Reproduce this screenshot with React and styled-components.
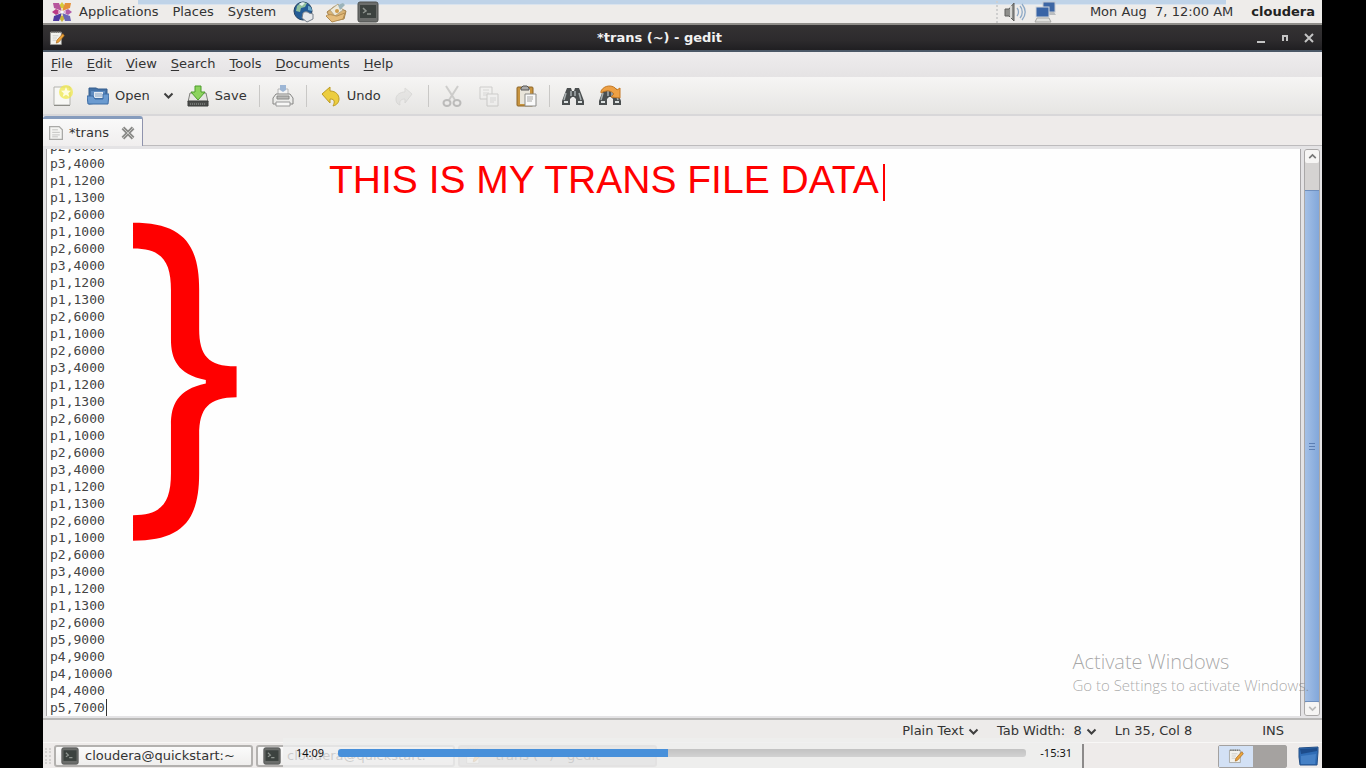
import React, { useLayoutEffect, useRef } from "react";
import styled, { createGlobalStyle, css } from "styled-components";

const GlobalStyle = createGlobalStyle`
  * { box-sizing: border-box; }
  body { margin: 0; background: #000; }
  button, input, textarea, select { font: inherit; color: inherit; margin: 0; }
  button { border: 0; background: none; padding: 0; }
`;

const Desktop = styled.div`
  position: relative;
  display: flex;
  flex-direction: column;
  min-height: 100vh;
  margin: 0 44px 0 43px;
  background: #edebea;
  color: #333;
  font: 13px/18px "DejaVu Sans", sans-serif;
  overflow: hidden;
`;

const Panel = styled.header`
  position: relative;
  display: flex;
  align-items: center;
  height: 25px;
  padding: 0 7px 0 8px;
  background: #eeecea;
  border-bottom: 2px solid #8f8d89;
  &::before {
    content: "";
    position: absolute;
    inset: 0 96px auto 95px;
    height: 4px;
    background: #bfd3e8;
    border-bottom: 1px solid #d9e3ee;
  }
`;

const PanelMenu = styled.nav`
  position: relative;
  display: flex;
  align-items: center;
  gap: 14px;
`;

const PanelButton = styled.button`
  display: flex;
  align-items: center;
  gap: 6px;
`;

const Launchers = styled.div`
  position: relative;
  display: flex;
  gap: 10px;
  margin-left: 17px;
`;

const Tray = styled.div`
  position: relative;
  display: flex;
  align-items: center;
  gap: 8px;
  margin-left: auto;
  white-space: pre;
  padding-left: 6px;
  border-left: 2px dotted #cfcfcf;
`;

const Clock = styled.time`
  margin-left: 26px;
`;

const UserName = styled.strong`
  margin-left: 10px;
  color: #222;
`;

const TitleBar = styled.div`
  display: grid;
  grid-template-columns: 72px 1fr 72px;
  align-items: center;
  height: 27px;
  padding: 0 6px;
  background: linear-gradient(#343233, #2d2b2d 60%, #201f22);
  border-bottom: 2px solid #4c5968;
`;

const Title = styled.h1`
  margin: 0;
  padding-right: 46px;
  text-align: center;
  color: #f2f2f2;
  font-size: 13px;
  line-height: 18px;
`;

const WindowButtons = styled.div`
  display: flex;
  justify-content: flex-end;
  gap: 10px;
`;

const WindowButton = styled.button`
  display: flex;
`;

const MenuBar = styled.nav`
  display: flex;
  align-items: center;
  gap: 14px;
  height: 25px;
  padding: 0 8px 2px;
  background: linear-gradient(#efedee, #e5e3e4);
`;

const Mnemonic = styled.span`
  text-decoration: underline;
  text-underline-offset: 2px;
`;

const ToolBar = styled.div`
  display: flex;
  align-items: center;
  height: 39px;
  padding: 0 3px;
  background: linear-gradient(#f6f5f4, #e6e5e3);
  border-bottom: 2px solid #d8d7d9;
`;

const ToolGroup = styled.div`
  display: flex;
  align-items: center;
  gap: ${(p) => (p.$wide ? 3 : 1)}px;
`;

const ToolButton = styled.button`
  display: flex;
  align-items: center;
  gap: 6px;
  height: 34px;
  padding: 0 6px;
  opacity: ${(p) => (p.disabled ? 0.35 : 1)};
`;

const Separator = styled.span`
  width: 1px;
  height: 22px;
  margin: 0 6px;
  background: #c9c8c6;
`;

const TabStrip = styled.div`
  display: flex;
  height: 30px;
  background: #eeebea;
  border-bottom: 1px solid #bdbbbd;
`;

const Tab = styled.div`
  display: flex;
  align-items: center;
  gap: 6px;
  height: 30px;
  padding: 0 7px 0 6px;
  background: linear-gradient(#f9f9f9, #f0eeee);
  border: 1px solid #8f93ad;
  border-width: 3px 1px 0 0;
  border-top-color: #869cbd;
  border-radius: 3px 3px 0 0;
`;

const TabLabel = styled.span`
  width: 46px;
`;

const TabClose = styled.button`
  display: flex;
`;

const EditorFrame = styled.main`
  flex: 1;
  display: flex;
  padding: 3px 2px 2px 3px;
  background: #e4e3e5;
  border-bottom: 2px solid #b9b8b7;
`;

const Page = styled.div`
  position: relative;
  flex: 1;
  display: flex;
  background: #fefefe;
  border: 1px solid #a8a6a8;
  border-width: 0 1px;
`;

const Source = styled.textarea`
  flex: 1;
  display: block;
  height: 567px;
  padding: 0 0 0 3px;
  border: 0;
  outline: 0;
  resize: none;
  overflow: hidden;
  background: transparent;
  color: #444;
  font: 13px/17px "DejaVu Sans Mono", monospace;
`;

const TextCaret = styled.span`
  position: absolute;
  left: 59px;
  bottom: 0;
  width: 1px;
  height: 17px;
  background: #333;
`;

const Annotation = styled.div`
  position: absolute;
  left: 282px;
  top: 11px;
  padding-right: 6px;
  color: #f00;
  font: 39px/40px "Liberation Sans", Arial, sans-serif;
  white-space: nowrap;
  &::after {
    content: "";
    position: absolute;
    right: 0;
    top: 4px;
    width: 2px;
    height: 37px;
    background: #f00;
  }
`;

const Brace = styled.div`
  position: absolute;
  left: 65px;
  top: 42px;
  color: #f00;
  font: 350px/350px Inter, sans-serif;
`;

const ScrollBar = styled.div`
  display: flex;
  flex-direction: column;
  width: 16px;
  margin-left: 3px;
  background: #d5d3d2;
  border: 1px solid #aaa8a8;
  border-radius: 3px;
`;

const ScrollStep = styled.button`
  display: flex;
  align-items: center;
  justify-content: center;
  height: 13px;
  background: #f6f5f4;
  border-radius: 2px;
`;

const ScrollTrough = styled.div`
  flex: 1;
  display: flex;
  padding-top: 27px;
`;

const ScrollThumb = styled.div`
  flex: 1;
  display: flex;
  align-items: center;
  justify-content: center;
  background: linear-gradient(90deg, #a4c0e6, #82a7da);
  border: 1px solid #6f8fbd;
  border-width: 1px 0;
`;

const Watermark = styled.aside`
  position: absolute;
  right: 13px;
  bottom: 73px;
  color: rgba(110, 110, 110, 0.6);
  font: 300 15px/20px "Open Sans", "Noto Sans", sans-serif;
  white-space: nowrap;
`;

const WatermarkTitle = styled.div`
  font-size: 20px;
  line-height: 26px;
`;

const StatusBar = styled.footer`
  display: flex;
  align-items: center;
  justify-content: flex-end;
  height: 22px;
  padding-right: 38px;
`;

const StatusItem = styled.button`
  display: flex;
  align-items: center;
  gap: 4px;
  white-space: pre;
  margin-right: ${(p) => p.$space || 18}px;
`;

const TaskBar = styled.footer`
  display: flex;
  align-items: center;
  gap: 3px;
  height: 26px;
  padding: 1px 2px 0 2px;
  background: #eeebea;
  border-top: 1px solid #f8f7f6;
`;

const Grip = styled.span`
  width: 6px;
  height: 16px;
  border-left: 2px dotted #d4d2d0;
  border-right: 2px dotted #d4d2d0;
`;

const Task = styled.button`
  display: flex;
  align-items: center;
  gap: 6px;
  width: 199px;
  height: 22px;
  padding: 0 5px;
  border: 2px solid #b3b1af;
  border-radius: 3px;
  background: linear-gradient(#fbfbfb, #efeeed);
  ${(p) =>
    p.$active &&
    css`
      background: #c4c2c0;
      border-color: #b0aeac;
    `}
`;

const Pager = styled.div`
  display: flex;
  width: 69px;
  height: 23px;
  margin-left: auto;
  border: 1px solid #a3a1a0;
  border-radius: 2px;
`;

const Workspace = styled.button`
  flex: 1;
  display: flex;
  align-items: center;
  justify-content: center;
  background: ${(p) => (p.$current ? "#d3e1f5" : "#a5a2a0")};
`;

const TrashSlot = styled.button`
  display: flex;
  margin-left: 8px;
`;

const Player = styled.section`
  position: absolute;
  left: 240px;
  right: 238px;
  bottom: 0;
  display: flex;
  align-items: flex-start;
  gap: 14px;
  height: 30px;
  padding: 6px 12px 0 13px;
  background: rgba(238, 238, 238, 0.82);
  color: #111;
  font: 11px/18px "Noto Sans", sans-serif;
  &::after {
    content: "";
    position: absolute;
    inset: 6px 0 0 auto;
    width: 2px;
    background: #8c8a8a;
  }
`;

const Seek = styled.input`
  appearance: none;
  flex: 1;
  min-width: 0;
  height: 8px;
  margin: 5px 0 0;
  border-radius: 3px;
  background: linear-gradient(#4890da, #4890da) left / 48% 100% no-repeat,
    linear-gradient(#c2c2c2, #d2d2d2);
  &::-webkit-slider-thumb {
    appearance: none;
    width: 1px;
    height: 8px;
  }
`;

const Svg = ({ size = 22, children }) => (
  <svg width={size} height={size} viewBox="0 0 22 22" fill="none" aria-hidden="true">
    {children}
  </svg>
);

const DistroIcon = () => (
  <Svg>
    <path d="M11 1l3 4-3 5-3-5z" fill="#d8c93a" />
    <path d="M21 11l-4 3-5-3 5-3z" fill="#b05aa8" />
    <path d="M11 21l-3-4 3-5 3 5z" fill="#c9b53c" />
    <path d="M1 11l4-3 5 3-5 3z" fill="#b93a86" />
    <path d="M2 2h6l3 8-8-3z" fill="#b6559d" />
    <path d="M20 2h-6l-3 8 8-3z" fill="#e5913b" />
    <path d="M20 20h-6l-3-8 8 3z" fill="#6a67b5" />
    <path d="M2 20h6l3-8-8 3z" fill="#4f3aa0" />
    <path d="M11 7v8M7 11h8" stroke="#fff" />
  </Svg>
);

const GlobeIcon = () => (
  <Svg>
    <circle cx="10" cy="10" r="9" fill="#245c96" stroke="#244261" />
    <path d="M4 5c3-4 8-4 10-3l-2 4-4 1-1 4-4-1z" fill="#8fc09c" />
    <path d="M6 3c2-2 5-2 6-1l-3 3z" fill="#e3f0ed" />
    <path d="M10 12c2-2 5-1 6 0l4 1v5l-6 3-5-4z" fill="#e6e8eb" stroke="#77808b" />
    <path d="M15 5c3 0 4 3 4 5l-4-1z" fill="#6da9c8" />
  </Svg>
);

const MailIcon = () => (
  <Svg>
    <path d="M2 11l8-6 11 5-2 8-12 2z" fill="#d9b273" stroke="#a3814c" />
    <path d="M5 9l8-6 5 6-8 6z" fill="#eee9da" stroke="#b5a888" />
    <path d="M13 4l5-2 2 2-5 5z" fill="#9bb3ba" />
    <path d="M1 15c4-3 8 0 11 0l8-3-2 6-11 3z" fill="#e5bc7b" stroke="#b38c51" />
    <circle cx="12" cy="10" r="2" fill="#cf9d4d" />
  </Svg>
);

const TerminalIcon = ({ size }) => (
  <Svg size={size}>
    <rect x="1" y="1" width="20" height="20" rx="2" fill="#6b6d6b" stroke="#4e504e" />
    <rect x="3" y="4" width="16" height="13" fill="#3c423f" />
    <path d="M6 7l3 3-3 2M10 13h4" stroke="#8f9590" strokeWidth="1.5" />
  </Svg>
);

const SpeakerIcon = () => (
  <Svg>
    <path d="M1 8h4l5-6v18l-5-5H1z" fill="#8e8e8b" stroke="#5e5e5c" />
    <path d="M7 5v12" stroke="#d5d5d2" strokeWidth="2" />
    <path d="M13 7c2 2 2 6 0 8M16 5c3 3 3 9 0 12M18 3c4 5 4 11 0 16" stroke="#8ea9c6" strokeWidth="1.3" />
  </Svg>
);

const NetworkIcon = () => (
  <Svg>
    <rect x="9" y="1" width="12" height="10" fill="#3d66a5" stroke="#c3c8d0" />
    <path d="M13 14h9l-2-3h-6z" fill="#babdc0" />
    <rect x="2" y="6" width="13" height="10" fill="#3964a6" stroke="#d2d6db" />
    <path d="M1 21h16l-2-4H3z" fill="#e1e1de" stroke="#a6a6a3" />
  </Svg>
);

const NotepadIcon = ({ size }) => (
  <Svg size={size}>
    <path d="M2 3h15v17H2z" fill="#f2f2ee" stroke="#999994" />
    <path d="M3 3h13" stroke="#7c7c78" strokeWidth="2" strokeDasharray="2 1" />
    <path d="M5 8h8M5 11h6M5 14h5" stroke="#c2c2be" />
    <path d="M19 5l2 3-8 9-3 1 1-4z" fill="#eba43a" stroke="#a8691e" />
  </Svg>
);

const NewIcon = () => (
  <Svg>
    <path d="M2 2h16v18H2z" fill="#f8f8f5" stroke="#b3b3ae" />
    <path d="M2 20.500h16" stroke="#8e8e88" />
    <circle cx="14" cy="7" r="7" fill="#f0e84a" opacity=".75" />
    <path d="M14 2l1.500 3.500 3.500.3-2.700 2.400.9 3.600-3.200-2-3.200 2 .9-3.600L9 5.800l3.500-.3z" fill="#fffde0" />
  </Svg>
);

const FolderIcon = () => (
  <Svg>
    <path d="M2 19V3h7l2 1h9v13z" fill="#4572a6" stroke="#355d8c" />
    <path d="M4 6h14v6H4z" fill="#5f8cc0" />
    <path d="M7 7h9v6H7z" fill="#e3eaf2" />
    <path d="M8 9h7M8 11h7" stroke="#8ca7c4" />
    <path d="M0 11h6l2 3h8V9h6l-1 10H1z" fill="#6b9bd0" stroke="#3d6ca5" />
  </Svg>
);

const SaveIcon = () => (
  <Svg>
    <path d="M3 8h16l2 9H1z" fill="#e5e5e2" stroke="#80807c" />
    <path d="M1 16h20v5H1z" fill="#4b4d4b" stroke="#3b3d3b" />
    <path d="M3 19h16" stroke="#9da09d" strokeDasharray="1 1" />
    <path d="M8 1h6v6h4l-7 8-7-8h4z" fill="#8cd35e" stroke="#4c9d2b" />
  </Svg>
);

const PrintIcon = () => (
  <Svg>
    <path d="M6 9V4h10v5" fill="#f5f5f5" stroke="#b6b6b6" />
    <path d="M8 0h6v5l-3 2-3-2z" fill="#9db6d5" />
    <path d="M4 9h14l3 4v6H1v-6z" fill="#ececea" stroke="#858583" />
    <path d="M5 11h12v3H5z" fill="#b9b9b7" stroke="#8a8a88" />
    <path d="M4 17h14v4H4z" fill="#f7f7f6" stroke="#999" />
  </Svg>
);

const UndoIcon = () => (
  <Svg>
    <path d="M3 9l8-7v4c6 0 9 4 9 8 0 3-2 6-6 7 2-4 2-7-3-7v4z" fill="#eccd3f" stroke="#bd9b23" />
  </Svg>
);

const RedoIcon = () => (
  <Svg>
    <path d="M18 9l-7-6v4C6 7 2 10 2 14c0 3 1 5 4 6-1-4 1-6 5-6v4z" fill="#d3d3d1" stroke="#b5b5b3" />
  </Svg>
);

const CutIcon = () => (
  <Svg>
    <path d="M5 1l9 14M17 1L8 15" stroke="#8f8f8d" strokeWidth="2" />
    <ellipse cx="6" cy="18" rx="3.500" ry="3" stroke="#666" strokeWidth="2" />
    <ellipse cx="16" cy="18" rx="3.500" ry="3" stroke="#666" strokeWidth="2" />
  </Svg>
);

const CopyIcon = () => (
  <Svg>
    <path d="M2 2h12v12H2z" fill="#f1f1f0" stroke="#8d8d8b" />
    <path d="M5 5h6M5 8h6M5 10h6" stroke="#aaa" />
    <path d="M9 9h11v12H9z" fill="#f5f5f4" stroke="#8d8d8b" />
    <path d="M12 13h6M12 15h6M12 17h4" stroke="#aaa" />
  </Svg>
);

const PasteIcon = () => (
  <Svg>
    <rect x="2" y="2" width="16" height="19" rx="1" fill="#c8943f" stroke="#8c6528" />
    <path d="M5 4h10v15H5z" fill="#e9e5da" />
    <path d="M6 5V3l2-2h4l2 2v2z" fill="#aaa" stroke="#555" />
    <path d="M10 9h11v12H10z" fill="#fafafa" stroke="#8b8b88" />
    <path d="M12 12h6M12 14h6M12 16h5" stroke="#a7a7a5" />
  </Svg>
);

const Binoculars = () => (
  <>
    <path d="M5 3h4l1 3h2l1-3h4l2 5 3 8v4h-8v-6l-2-2h-2l-2 2v6H0v-4l3-8z" fill="#4b4f50" />
    <path d="M4 8l-2 7M17 8l2 7M9 6v5M13 6v5" stroke="#a8afb0" strokeWidth="1.500" />
    <path d="M2 16h4v2H2zM16 16h4v2h-4z" fill="#dce1e1" />
  </>
);

const FindIcon = () => (
  <Svg>
    <Binoculars />
  </Svg>
);

const ReplaceIcon = () => (
  <Svg>
    <Binoculars />
    <path d="M2 6c3-6 12-7 16-1l3-2v10l-9-1 3-3C12 5 7 5 2 8z" fill="#eda044" stroke="#c57924" />
  </Svg>
);

const DocIcon = () => (
  <Svg size={14}>
    <path d="M1 1h15l5 5v15H1z" fill="#f4f4f2" stroke="#a9a9a7" strokeWidth="2" />
    <path d="M5 6h9M5 10h12M5 14h12M5 17h9" stroke="#c2c2c0" strokeWidth="1.500" />
  </Svg>
);

const CloseTabIcon = () => (
  <Svg size={14}>
    <path d="M3 3l16 16M19 3L3 19" stroke="#8a8a88" strokeWidth="6" />
    <path d="M3 3l16 16M19 3L3 19" stroke="#c8c8c6" strokeWidth="1.500" />
  </Svg>
);

const Chevron = ({ up, size = 11, color = "#3f3f3f" }) => (
  <svg width={size} height={size} viewBox="0 0 11 11" fill="none" aria-hidden="true">
    <path d={up ? "M1.500 7.500l4-4 4 4" : "M1.500 3.500l4 4 4-4"} stroke={color} strokeWidth="2" />
  </svg>
);

const WindowGlyph = ({ d }) => (
  <svg width="14" height="14" viewBox="0 0 14 14" fill="none" aria-hidden="true">
    <path d={d} stroke="#c4c4c4" strokeWidth="2" />
  </svg>
);

const TrashIcon = () => (
  <Svg>
    <path d="M1 3l19-1v5l-1 13H2L1 12z" fill="#2f6cb5" stroke="#244f86" />
    <path d="M2 4l17-1v3L3 9z" fill="#1d4c8b" />
    <path d="M3 11l15-2-1 10H3z" fill="#4681c6" />
  </Svg>
);

const LINES = [
  "p1,1000", "p2,6000",
  "p3,4000", "p1,1200", "p1,1300", "p2,6000", "p1,1000", "p2,6000",
  "p3,4000", "p1,1200", "p1,1300", "p2,6000", "p1,1000", "p2,6000",
  "p3,4000", "p1,1200", "p1,1300", "p2,6000", "p1,1000", "p2,6000",
  "p3,4000", "p1,1200", "p1,1300", "p2,6000", "p1,1000", "p2,6000",
  "p3,4000", "p1,1200", "p1,1300", "p2,6000",
  "p5,9000", "p4,9000", "p4,10000", "p4,4000", "p5,7000",
];

const MENUS = ["File", "Edit", "View", "Search", "Tools", "Documents", "Help"];

function Editor() {
  const ref = useRef(null);
  useLayoutEffect(() => {
    ref.current.scrollTop = ref.current.scrollHeight;
  }, []);
  return (
    <EditorFrame>
      <Page>
        <Source ref={ref} aria-label="Document text" spellCheck={false} defaultValue={LINES.join("\n")} />
        <TextCaret />
        <Annotation>THIS IS MY TRANS FILE DATA</Annotation>
        <Brace>{"}"}</Brace>
      </Page>
      <ScrollBar>
        <ScrollStep aria-label="Scroll up"><Chevron up size={9} color="#777" /></ScrollStep>
        <ScrollTrough>
          <ScrollThumb>
            <svg width="6" height="7" viewBox="0 0 6 7" aria-hidden="true">
              <path d="M0 .5h6M0 3.500h6M0 6.500h6" stroke="#5c7fb4" />
            </svg>
          </ScrollThumb>
        </ScrollTrough>
        <ScrollStep aria-label="Scroll down"><Chevron size={9} color="#bbb" /></ScrollStep>
      </ScrollBar>
    </EditorFrame>
  );
}

export default function App() {
  return (
    <>
      <GlobalStyle />
      <Desktop>
        <Panel>
          <PanelMenu>
            <PanelButton><DistroIcon />Applications</PanelButton>
            <PanelButton>Places</PanelButton>
            <PanelButton>System</PanelButton>
          </PanelMenu>
          <Launchers>
            <PanelButton aria-label="Web browser"><GlobeIcon /></PanelButton>
            <PanelButton aria-label="Mail"><MailIcon /></PanelButton>
            <PanelButton aria-label="Terminal"><TerminalIcon /></PanelButton>
          </Launchers>
          <Tray>
            <SpeakerIcon />
            <NetworkIcon />
            <Clock>Mon Aug  7, 12:00 AM</Clock>
            <UserName>cloudera</UserName>
          </Tray>
        </Panel>

        <TitleBar>
          <NotepadIcon size={16} />
          <Title>*trans (~) - gedit</Title>
          <WindowButtons>
            <WindowButton aria-label="Minimize"><WindowGlyph d="M3 11h8" /></WindowButton>
            <WindowButton aria-label="Maximize"><WindowGlyph d="M5 10V5h4v5" /></WindowButton>
            <WindowButton aria-label="Close"><WindowGlyph d="M3 3l8 8M11 3l-8 8" /></WindowButton>
          </WindowButtons>
        </TitleBar>

        <MenuBar>
          {MENUS.map((m) => (
            <button key={m}><Mnemonic>{m[0]}</Mnemonic>{m.slice(1)}</button>
          ))}
        </MenuBar>

        <ToolBar>
          <ToolGroup>
            <ToolButton aria-label="New"><NewIcon /></ToolButton>
            <ToolButton><FolderIcon />Open</ToolButton>
            <ToolButton aria-label="Recent files"><Chevron /></ToolButton>
            <ToolButton><SaveIcon />Save</ToolButton>
          </ToolGroup>
          <Separator />
          <ToolButton aria-label="Print"><PrintIcon /></ToolButton>
          <Separator />
          <ToolGroup>
            <ToolButton><UndoIcon />Undo</ToolButton>
            <ToolButton aria-label="Redo" disabled><RedoIcon /></ToolButton>
          </ToolGroup>
          <Separator />
          <ToolGroup $wide>
            <ToolButton aria-label="Cut" disabled><CutIcon /></ToolButton>
            <ToolButton aria-label="Copy" disabled><CopyIcon /></ToolButton>
            <ToolButton aria-label="Paste"><PasteIcon /></ToolButton>
          </ToolGroup>
          <Separator />
          <ToolGroup $wide>
            <ToolButton aria-label="Find"><FindIcon /></ToolButton>
            <ToolButton aria-label="Replace"><ReplaceIcon /></ToolButton>
          </ToolGroup>
        </ToolBar>

        <TabStrip>
          <Tab>
            <DocIcon />
            <TabLabel>*trans</TabLabel>
            <TabClose aria-label="Close tab"><CloseTabIcon /></TabClose>
          </Tab>
        </TabStrip>

        <Editor />

        <StatusBar>
          <StatusItem>Plain Text<Chevron /></StatusItem>
          <StatusItem>Tab Width:  8<Chevron /></StatusItem>
          <StatusItem as="span" $space={70}>Ln 35, Col 8</StatusItem>
          <span>INS</span>
        </StatusBar>

        <TaskBar>
          <Grip />
          <Task><TerminalIcon size={18} />cloudera@quickstart:~</Task>
          <Task><TerminalIcon size={18} />cloudera@quickstart:~</Task>
          <Task $active><NotepadIcon size={18} />*trans (~) - gedit</Task>
          <Pager>
            <Workspace $current aria-label="Workspace 1"><NotepadIcon size={16} /></Workspace>
            <Workspace aria-label="Workspace 2" />
          </Pager>
          <TrashSlot aria-label="Trash"><TrashIcon /></TrashSlot>
        </TaskBar>

        <Player>
          <span>14:09</span>
          <Seek type="range" min="0" max="1780" defaultValue="849" aria-label="Seek" />
          <span>-15:31</span>
        </Player>

        <Watermark>
          <WatermarkTitle>Activate Windows</WatermarkTitle>
          Go to Settings to activate Windows.
        </Watermark>
      </Desktop>
    </>
  );
}
